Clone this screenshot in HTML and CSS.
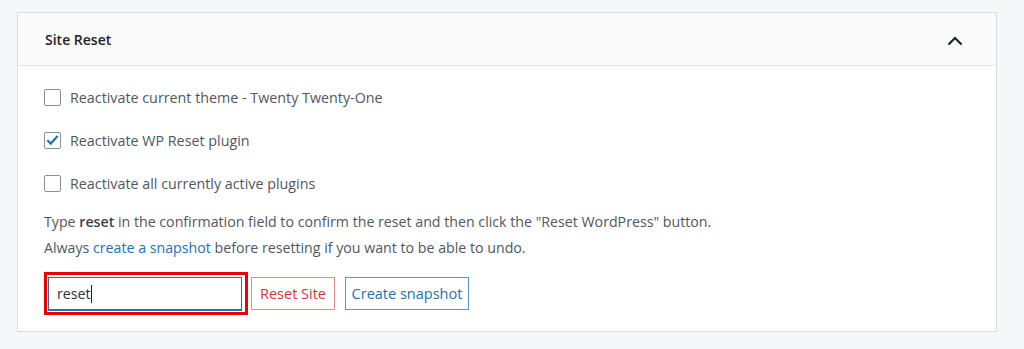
FILE: index.html
```html
<!DOCTYPE html>
<html lang="en">
<head>
    <meta charset="UTF-8">
    <meta name="viewport" content="width=device-width, initial-scale=1.0">
    <title>Site Reset</title>
    <link rel="stylesheet" href="styles.css">
</head>
<body>
    <div class="card">
        <div class="card-header">
            <h2>Site Reset</h2>
            <svg class="chevron" width="16" height="10" viewBox="0 0 16 10">
                <path d="M1.5 8.5 L8 2 L14.5 8.5" fill="none" stroke="#1d2327" stroke-width="2.2"/>
            </svg>
        </div>

        <div class="card-body">
            <label class="check-row">
                <span class="checkbox"></span>
                Reactivate current theme - Twenty Twenty-One
            </label>
            <label class="check-row">
                <span class="checkbox">
                    <svg width="16" height="16" viewBox="0 0 16 16">
                        <path d="M2.5 8.2 L6.2 11.8 L13.5 3.6" fill="none" stroke="#2271b1" stroke-width="2.4"/>
                    </svg>
                </span>
                Reactivate WP Reset plugin
            </label>
            <label class="check-row">
                <span class="checkbox"></span>
                Reactivate all currently active plugins
            </label>

            <p class="info">
                Type <b>reset</b> in the confirmation field to confirm the reset and then click the "Reset WordPress" button.<br>
                Always <a href="#">create a snapshot</a> before resetting if you want to be able to undo.
            </p>

            <div class="actions">
                <div class="highlight">
                    <div class="confirm-input">reset<span class="caret"></span></div>
                </div>
                <button class="btn btn-red">Reset Site</button>
                <button class="btn btn-blue">Create snapshot</button>
            </div>
        </div>
    </div>
</body>
</html>
```

FILE: styles.css
```css
* {
    box-sizing: border-box;
    margin: 0;
    padding: 0;
    font-family: 'Open Sans', 'Noto Sans', sans-serif;
}

body {
    background-color: #f6f7f9;
    padding: 12px 26px 0 17px;
    color: #50575e;
    font-size: 14.2px;
}

.card {
    width: 980px;
    background: white;
    border: 1px solid #dcdcde;
}

.card-header {
    height: 53px;
    background-color: #fafafa;
    border-bottom: 1px solid #e6e6e8;
    display: flex;
    align-items: center;
    justify-content: space-between;
    padding: 0 33px 0 27px;
}

.card-header h2 {
    font-size: 14px;
    font-weight: 600;
    color: #1d2327;
}

.chevron {
    margin-top: 4px;
}

.card-body {
    padding: 19px 26px 16px;
}

.check-row {
    display: flex;
    align-items: center;
    height: 24px;
    margin-bottom: 19px;
    gap: 9px;
    font-size: 14.3px;
}

.check-row:last-of-type {
    margin-bottom: 14px;
}

.checkbox {
    width: 17px;
    height: 17px;
    border: 1px solid #8c8f94;
    border-radius: 2px;
    display: flex;
    align-items: center;
    justify-content: center;
}

.info {
    line-height: 26px;
    margin-bottom: 11px;
}

.info b {
    color: #3c434a;
    font-weight: 600;
}

.info a {
    color: #2271b1;
    text-decoration: none;
}

.actions {
    display: flex;
    align-items: center;
    gap: 10px;
}

.highlight {
    border: 3px solid #ee0000;
    padding: 2px 3px 1px 1px;
    margin-right: -7px;
}

.confirm-input {
    width: 194px;
    height: 34px;
    border: 1px solid #2271b1;
    border-bottom-width: 2px;
    padding-left: 8px;
    display: flex;
    align-items: center;
    color: #2c3338;
}

.caret {
    width: 1px;
    height: 18px;
    background: #1d2327;
}

.btn {
    height: 33px;
    background: white;
    font-size: 14.5px;
    padding: 0;
    white-space: nowrap;
    border-radius: 0;
}

.btn-red {
    width: 84px;
    border: 1px solid #e58b8c;
    color: #d63638;
}

.btn-blue {
    width: 124px;
    border: 1px solid #5b96c9;
    color: #2271b1;
}
```
